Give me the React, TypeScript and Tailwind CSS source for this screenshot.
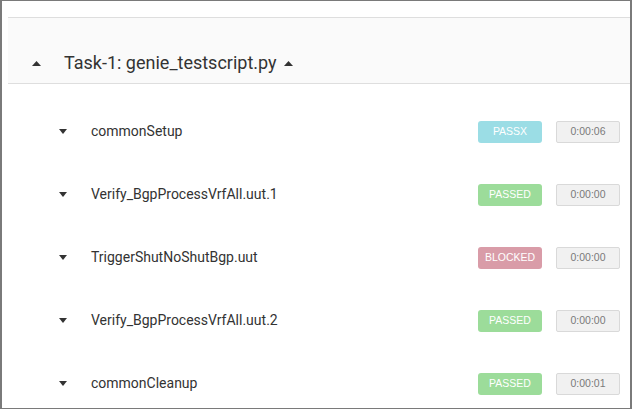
import React from 'react';

type Status = 'PASSX' | 'PASSED' | 'BLOCKED';

interface Section {
    name: string;
    status: Status;
    duration: string;
}

const sections: Section[] = [
    { name: 'commonSetup', status: 'PASSX', duration: '0:00:06' },
    { name: 'Verify_BgpProcessVrfAll.uut.1', status: 'PASSED', duration: '0:00:00' },
    { name: 'TriggerShutNoShutBgp.uut', status: 'BLOCKED', duration: '0:00:00' },
    { name: 'Verify_BgpProcessVrfAll.uut.2', status: 'PASSED', duration: '0:00:00' },
    { name: 'commonCleanup', status: 'PASSED', duration: '0:00:01' },
];

const statusStyles: Record<Status, string> = {
    PASSX: 'bg-[#9bdde5]',
    PASSED: 'bg-[#9cdc9a]',
    BLOCKED: 'bg-[#d99ca8]',
};

const CaretUp = () => (
    <svg width="9" height="5" viewBox="0 0 9 5" className="shrink-0">
        <path d="M0 5 L4.5 0 L9 5 Z" fill="#333" />
    </svg>
);

const CaretDown = () => (
    <svg width="8" height="5" viewBox="0 0 8 5" className="shrink-0">
        <path d="M0 0 L8 0 L4 5 Z" fill="#333" />
    </svg>
);

const SectionRow: React.FC<{ section: Section }> = ({ section }) => (
    <div className="flex items-center h-[63px] pl-[51px] pr-[10px]">
        <CaretDown />
        <span className="ml-[24px] flex-1 text-[14px] text-[#333]">{section.name}</span>
        <div
            className={`w-[64px] h-[22px] rounded-[3px] flex items-center justify-center text-white text-[10.5px] font-['Liberation_Sans',Arial,sans-serif] ${statusStyles[section.status]}`}
        >
            {section.status}
        </div>
        <div className="ml-[14px] w-[64px] h-[22px] rounded-[2px] border border-[#d9d9d9] bg-[#f1f1f1] flex items-center justify-center text-[#7a7a7a] text-[10.5px] font-['Liberation_Sans',Arial,sans-serif]">
            {section.duration}
        </div>
    </div>
);

export default function App() {
    return (
        <div className="w-[632px] h-[409px] overflow-hidden bg-white border border-[#7a7a7a] border-x-2 pl-[6px] font-['Roboto',sans-serif]">
            <div className="pt-[16px]">
                <div className="h-[67px] border-y border-[#dedede] bg-[#fafafa] flex items-end pb-[8px] pl-[24px]">
                    <div className="flex items-center h-[24px] leading-[24px]">
                        <CaretUp />
                        <span className="ml-[23px] text-[18px] text-[#333]">Task-1: genie_testscript.py</span>
                        <span className="ml-[7px] flex items-center"><CaretUp /></span>
                    </div>
                </div>
                <div className="pt-[16px]">
                    {sections.map(s => (
                        <SectionRow key={s.name} section={s} />
                    ))}
                </div>
            </div>
        </div>
    );
}
